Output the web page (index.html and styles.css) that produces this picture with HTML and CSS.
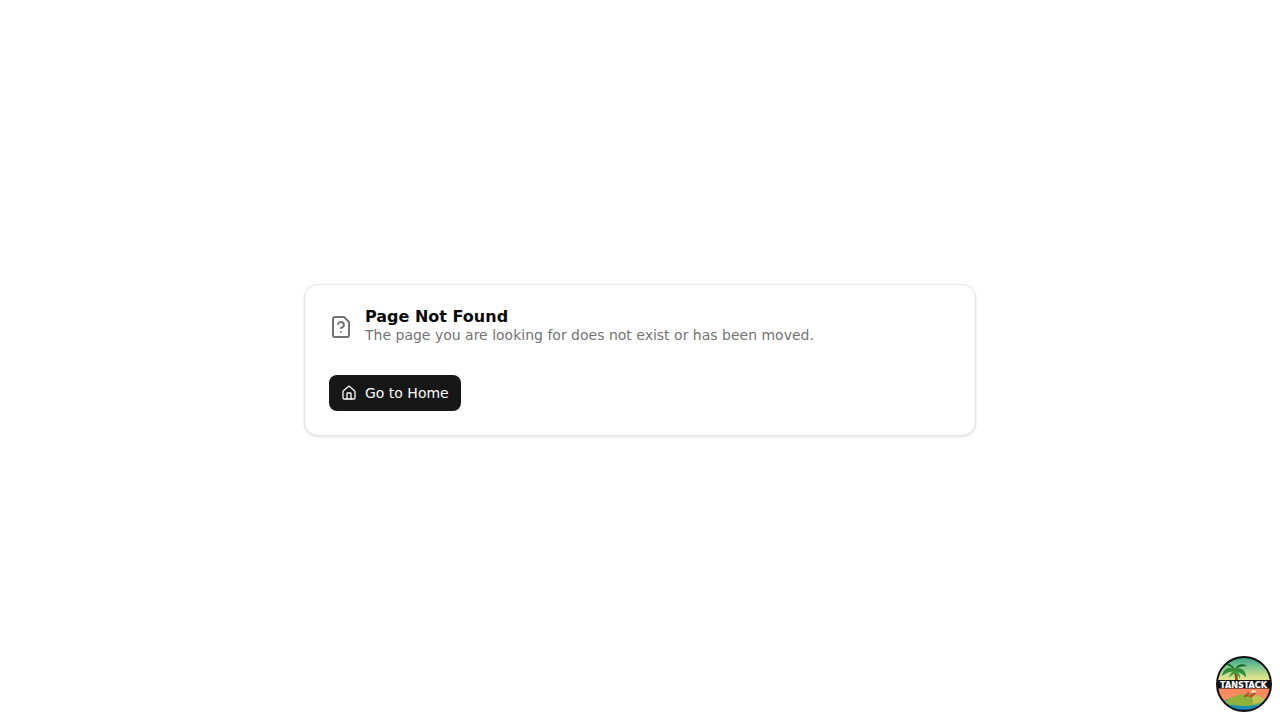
FILE: index.html
```html
<!DOCTYPE html>
<html lang="en">
<head>
    <meta charset="UTF-8">
    <meta name="viewport" content="width=device-width, initial-scale=1.0">
    <title>Page Not Found</title>
    <link rel="stylesheet" href="styles.css">
</head>
<body>
    <main class="page">
        <section class="card">
            <div class="card-header">
                <svg class="icon-question" viewBox="0 0 24 24" fill="none" stroke="currentColor" stroke-width="2" stroke-linecap="round" stroke-linejoin="round">
                    <path d="M12 17h.01"/>
                    <path d="M15 2H6a2 2 0 0 0-2 2v16a2 2 0 0 0 2 2h12a2 2 0 0 0 2-2V7z"/>
                    <path d="M9.1 9a3 3 0 0 1 5.82 1c0 2-3 3-3 3"/>
                </svg>
                <div class="card-titles">
                    <h1 class="card-title">Page Not Found</h1>
                    <p class="card-text">The page you are looking for does not exist or has been moved.</p>
                </div>
            </div>
            <a class="home-button" href="#">
                <svg class="icon-home" viewBox="0 0 24 24" fill="none" stroke="currentColor" stroke-width="2" stroke-linecap="round" stroke-linejoin="round">
                    <path d="M15 21v-8a1 1 0 0 0-1-1h-4a1 1 0 0 0-1 1v8"/>
                    <path d="M3 10a2 2 0 0 1 .709-1.528l7-5.999a2 2 0 0 1 2.582 0l7 5.999A2 2 0 0 1 21 10v9a2 2 0 0 1-2 2H5a2 2 0 0 1-2-2z"/>
                </svg>
                Go to Home
            </a>
        </section>
    </main>

    <!-- devtools badge -->
    <svg class="devtools-logo" viewBox="0 0 56 56">
        <defs>
            <linearGradient id="sky" x1="0" y1="0" x2="0" y2="1">
                <stop offset="0" stop-color="#2f9c8c"/>
                <stop offset="0.35" stop-color="#6fc08f"/>
                <stop offset="0.85" stop-color="#dfe38d"/>
            </linearGradient>
            <linearGradient id="sunset" x1="0" y1="0" x2="0" y2="1">
                <stop offset="0" stop-color="#fb7f5c"/>
                <stop offset="1" stop-color="#f9955e"/>
            </linearGradient>
            <clipPath id="round">
                <circle cx="28" cy="28" r="27"/>
            </clipPath>
        </defs>
        <g clip-path="url(#round)">
            <rect width="56" height="26" fill="url(#sky)"/>
            <rect y="26" width="56" height="22" fill="url(#sunset)"/>
            <ellipse cx="28" cy="54" rx="28" ry="13" fill="#1fb3a6"/>
            <ellipse cx="28" cy="58" rx="28" ry="10" fill="#1a8fb5"/>
            <ellipse cx="28" cy="62" rx="28" ry="9" fill="#1a5a9c"/>
            <path d="M8 47c6-5 12-9 22-9 8 0 15 2 19 6-4 4-12 6-20 6-8 0-16-1-21-3z" fill="#8fb23c"/>
            <path d="M30 38c8 0 15 2 19 6-3 2-7 3-12 4 1-4-2-8-7-10z" fill="#c5c254"/>
            <path d="M19 25c0-4-.5-8-2-12l2.500-.6c1.800 4 2.500 8 2.500 12.600z" fill="#8a5a2e"/>
            <path d="M19 13c-6-3-12 0-13 7 3-3 8-5 13-4.500 4 .5 8 2 11 6 .5-6-5-11-11-8.500z" fill="#2f8a38"/>
            <path d="M19 13c-2-4-6-6-10-5 3 1 6 3 10 5zM19 13c2-5 8-6 12-3-5 0-8 1-12 3z" fill="#1f6a2c"/>
            <path d="M19 14c-3 1-5 4-6 8 2-2 4-4 6-5 2 1 4 3 5 6 1-4-2-8-5-9z" fill="#3f9a3c"/>
            <rect y="24" width="56" height="8.500" fill="#111"/>
            <path d="M27 41l5-5 2 1-3 4zM32 40l6-4 2 2-5 4z" fill="#b5532f"/>
            <path d="M35 35l4-1 1 2-4 1z" fill="#f4e9d0"/>
            <text x="27.500" y="31.500" class="logo-text" text-anchor="middle" textLength="47" lengthAdjust="spacingAndGlyphs">TANSTACK</text>
        </g>
        <circle cx="28" cy="28" r="27" fill="none" stroke="#111" stroke-width="2"/>
    </svg>
</body>
</html>
```

FILE: styles.css
```css
* {
    box-sizing: border-box;
}

body {
    margin: 0;
    font-family: "DejaVu Sans", sans-serif;
    background-color: #fff;
    color: #0a0a0a;
}

.page {
    min-height: 100vh;
    display: flex;
    justify-content: center;
    align-items: center;
}

.card {
    width: 672px;
    padding: 24px;
    background-color: #fff;
    border: 1px solid #e5e5e5;
    border-radius: 14px;
    box-shadow: 0 1px 3px rgba(0, 0, 0, 0.1), 0 1px 2px -1px rgba(0, 0, 0, 0.1);
}

.card-header {
    display: flex;
    align-items: center;
    gap: 12px;
    margin-bottom: 30px;
}

.icon-question {
    width: 24px;
    height: 24px;
    color: #737373;
    flex-shrink: 0;
}

.card-title {
    margin: 0;
    font-size: 16px;
    line-height: 16px;
    font-weight: 700;
    color: #0a0a0a;
}

.card-text {
    margin: 0;
    font-size: 14px;
    line-height: 20px;
    color: #737373;
}

.home-button {
    display: inline-flex;
    align-items: center;
    gap: 8px;
    height: 36px;
    padding: 0 12px;
    background-color: #171717;
    color: #fafafa;
    border-radius: 8px;
    font-size: 14px;
    font-weight: 500;
    text-decoration: none;
    vertical-align: top;
}

.icon-home {
    width: 16px;
    height: 16px;
}

.devtools-logo {
    position: fixed;
    right: 8px;
    bottom: 8px;
    width: 56px;
    height: 56px;
}

.logo-text {
    font-family: "DejaVu Sans", sans-serif;
    font-size: 9px;
    font-weight: 700;
    fill: #fff;
    stroke: #fff;
    stroke-width: 0.2px;
}
```
